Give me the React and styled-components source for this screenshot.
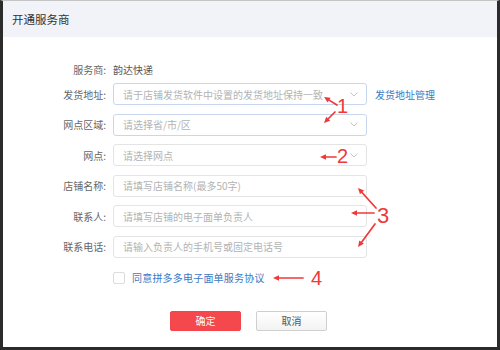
import React from 'react';
import styled, { createGlobalStyle } from 'styled-components';

const GlobalStyle = createGlobalStyle`
  html, body {
    margin: 0;
    padding: 0;
    background: #ffffff;
  }
  * {
    box-sizing: border-box;
  }
`;

const font = `"Noto Sans CJK SC", "Noto Sans", "Liberation Sans", sans-serif`;

const Frame = styled.div`
  position: relative;
  width: 500px;
  height: 350px;
  border-top: 1px solid #c4c4c4;
  border-left: 3px solid #2b2b2b;
  border-right: 3px solid #2b2b2b;
  border-bottom: 3px solid #2b2b2b;
  font-family: ${font};
  background: #fff;
  overflow: hidden;
`;

const Header = styled.div`
  height: 36px;
  background: #f1f3f8;
  display: flex;
  align-items: center;
  padding-left: 9px;
  font-size: 11.5px;
  color: #333;
`;

const Body = styled.div`
  padding-top: 24px;
  display: flex;
  flex-direction: column;
`;

const Row = styled.div`
  display: flex;
  align-items: center;
  height: ${p => p.h || 22}px;
  margin-bottom: ${p => p.mb ?? 8.6}px;
`;

const Label = styled.div`
  width: 103px;
  padding-right: 0;
  text-align: right;
  font-size: 10px;
  color: #666;
  margin-right: 7px;
  white-space: nowrap;
`;

const Value = styled.div`
  font-size: 10px;
  color: #555;
`;

const Field = styled.div`
  width: 254px;
  height: 22px;
  border: 1px solid ${p => (p.active ? '#c9d7ee' : '#e4e4e4')};
  border-radius: 3px;
  display: flex;
  align-items: center;
  justify-content: space-between;
  padding: 0 8px 0 9px;
  font-size: 10px;
  color: #b3b3b3;
  white-space: nowrap;
`;

const Chevron = styled.svg`
  width: 8px;
  height: 5px;
  flex: none;
`;

const Link = styled.a`
  margin-left: 8px;
  font-size: 10px;
  color: #3c78c3;
  text-decoration: none;
  white-space: nowrap;
`;

const AgreeRow = styled.div`
  display: flex;
  align-items: center;
  margin: 5px 0 0 110px;
  height: 12px;
`;

const CheckBox = styled.span`
  width: 12px;
  height: 12px;
  border: 1px solid #dcdcdc;
  border-radius: 2px;
  background: #fff;
  margin-right: 7px;
`;

const AgreeText = styled.span`
  font-size: 10px;
  color: #3c78c3;
  letter-spacing: 0.2px;
`;

const Actions = styled.div`
  display: flex;
  justify-content: center;
  gap: 15px;
  margin-top: 27px;
  padding-right: 3px;
`;

const Button = styled.button`
  width: 71px;
  height: 20px;
  border-radius: 2px;
  font-family: ${font};
  font-size: 10px;
  padding: 0;
  border: 1px solid ${p => (p.primary ? '#f2464a' : '#cfcfcf')};
  background: ${p => (p.primary ? '#f4484c' : 'linear-gradient(#ffffff, #f3f3f3)')};
  color: ${p => (p.primary ? '#fff' : '#555')};
`;

const Overlay = styled.svg`
  position: absolute;
  left: -3px;
  top: -1px;
  width: 500px;
  height: 350px;
  pointer-events: none;
`;

const Num = styled.text`
  font-family: "Liberation Sans", Arial, sans-serif;
  fill: #f0383a;
`;

const RED = '#f0383a';

function Arrow({ x1, y1, x2, y2 }) {
  const dx = x2 - x1;
  const dy = y2 - y1;
  const len = Math.hypot(dx, dy);
  const ux = dx / len;
  const uy = dy / len;
  const nx = -uy;
  const ny = ux;
  const hl = 6;
  const hw = 2.8;
  const bx = x2 - ux * hl;
  const by = y2 - uy * hl;
  const pts = [
    [x2, y2],
    [bx + nx * hw, by + ny * hw],
    [bx - nx * hw, by - ny * hw],
  ]
    .map(p => p.join(','))
    .join(' ');
  return (
    <g>
      <line x1={x1} y1={y1} x2={bx} y2={by} stroke={RED} strokeWidth="1.7" strokeLinecap="round" />
      <polygon points={pts} fill={RED} />
    </g>
  );
}

const DownIcon = () => (
  <Chevron viewBox="0 0 8 5">
    <path d="M0.5 0.5 L4 4 L7.5 0.5" fill="none" stroke="#bdbdbd" strokeWidth="0.9" />
  </Chevron>
);

const fields = [
  { label: '发货地址:', ph: '请于店铺发货软件中设置的发货地址保持一致', select: true, active: true, link: '发货地址管理' },
  { label: '网点区域:', ph: '请选择省/市/区', select: true, active: true },
  { label: '网点:', ph: '请选择网点', select: true },
  { label: '店铺名称:', ph: '请填写店铺名称(最多50字)' },
  { label: '联系人:', ph: '请填写店铺的电子面单负责人' },
  { label: '联系电话:', ph: '请输入负责人的手机号或固定电话号' },
];

export default function App() {
  return (
    <>
      <GlobalStyle />
      <Frame>
        <Header>开通服务商</Header>
        <Body>
          <Row h={16} mb={6}>
            <Label>服务商:</Label>
            <Value>韵达快递</Value>
          </Row>
          {fields.map((f, i) => (
            <Row key={i}>
              <Label>{f.label}</Label>
              <Field active={f.active}>
                <span>{f.ph}</span>
                {f.select && <DownIcon />}
              </Field>
              {f.link && <Link href="#">{f.link}</Link>}
            </Row>
          ))}
          <AgreeRow>
            <CheckBox />
            <AgreeText>同意拼多多电子面单服务协议</AgreeText>
          </AgreeRow>
          <Actions>
            <Button primary>确定</Button>
            <Button>取消</Button>
          </Actions>
        </Body>
        <Overlay viewBox="0 0 500 350">
          <Arrow x1={337} y1={105} x2={324} y2={97} />
          <Arrow x1={335} y1={112} x2={324} y2={123} />
          <Num x={337} y={113} fontSize="20">1</Num>
          <Arrow x1={336} y1={157} x2={320} y2={157} />
          <Num x={337} y={163} fontSize="20">2</Num>
          <Arrow x1={376} y1={208} x2={358} y2={188} />
          <Arrow x1={374} y1={213} x2={351} y2={213} />
          <Arrow x1={375} y1={224} x2={358} y2={247} />
          <Num x={377} y={223} fontSize="22">3</Num>
          <Arrow x1={303} y1={278} x2={273} y2={278} />
          <Num x={311} y={285} fontSize="20">4</Num>
        </Overlay>
      </Frame>
    </>
  );
}
